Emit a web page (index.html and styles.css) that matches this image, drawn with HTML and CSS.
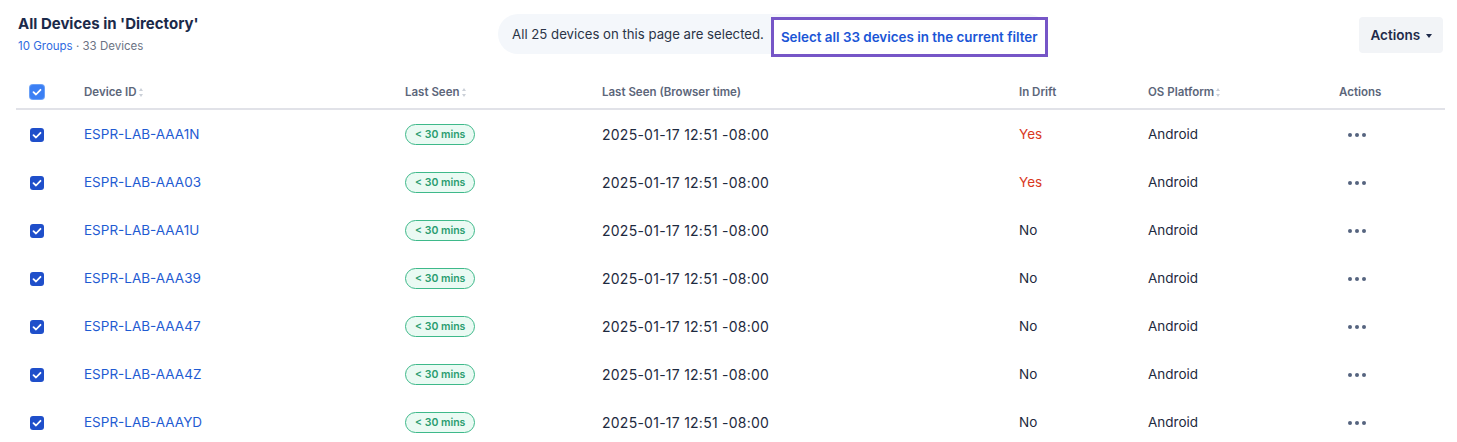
FILE: index.html
```html
<!DOCTYPE html>
<html lang="en">
<head>
    <meta charset="UTF-8">
    <meta name="viewport" content="width=device-width, initial-scale=1.0">
    <title>All Devices</title>
    <link rel="stylesheet" href="styles.css">
</head>
<body>
    <div id="page">
        <div class="topbar">
            <div class="title-block">
                <h1>All Devices in 'Directory'</h1>
                <div class="subtitle"><a href="#">10 Groups</a> · 33 Devices</div>
            </div>
            <div class="banner-wrap">
                <div class="banner">
                    <span>All 25 devices on this page are selected.</span>
                    <a href="#" class="select-all">Select all 33 devices in the current filter</a>
                </div>
            </div>
            <button class="actions-btn">Actions <span class="caret"></span></button>
        </div>

        <table class="devices">
            <colgroup>
                <col style="width: 54px">
                <col style="width: 321px">
                <col style="width: 197px">
                <col style="width: 417px">
                <col style="width: 129px">
                <col style="width: 191px">
                <col style="width: 120px">
            </colgroup>
            <thead>
                <tr>
                    <th><span class="check head-check"><svg viewBox="0 0 14 14"><path d="M3.5 7.2 L6 9.5 L10.5 4.8" /></svg></span></th>
                    <th>Device ID<span class="sort"></span></th>
                    <th>Last Seen<span class="sort"></span></th>
                    <th>Last Seen (Browser time)</th>
                    <th>In Drift</th>
                    <th>OS Platform<span class="sort"></span></th>
                    <th>Actions</th>
                </tr>
            </thead>
            <tbody id="rows"></tbody>
        </table>
    </div>

    <script>
        const rows = document.getElementById('rows');

        // id, in drift
        const devices = [
            ['ESPR-LAB-AAA1N', true],
            ['ESPR-LAB-AAA03', true],
            ['ESPR-LAB-AAA1U', false],
            ['ESPR-LAB-AAA39', false],
            ['ESPR-LAB-AAA47', false],
            ['ESPR-LAB-AAA4Z', false],
            ['ESPR-LAB-AAAYD', false]
        ];

        devices.forEach(([id, drift]) => {
            const tr = document.createElement('tr');
            tr.innerHTML = `
                <td><span class="check"><svg viewBox="0 0 14 14"><path d="M3.5 7.2 L6 9.5 L10.5 4.8" /></svg></span></td>
                <td><a href="#" class="device-link">${id}</a></td>
                <td><span class="badge">&lt; 30 mins</span></td>
                <td class="time">2025-01-17 12:51 -08:00</td>
                <td class="${drift ? 'drift-yes' : ''}">${drift ? 'Yes' : 'No'}</td>
                <td>Android</td>
                <td><span class="dots"><i></i><i></i><i></i></span></td>
            `;
            rows.appendChild(tr);
        });
    </script>
</body>
</html>
```

FILE: styles.css
```css
body {
    margin: 0;
    padding: 0;
    font-family: 'Inter', 'Liberation Sans', sans-serif;
    color: #1e2a40;
    background: #ffffff;
}
a {
    text-decoration: none;
}
#page {
    padding: 14px 14px 0 16px;
}
.topbar {
    display: flex;
    align-items: flex-start;
    height: 62px;
}
.title-block {
    padding-left: 2px;
}
.title-block h1 {
    margin: 0;
    font-size: 15px;
    font-weight: 700;
    color: #1b2a4a;
    line-height: 20px;
}
.subtitle {
    margin-top: 5px;
    font-size: 11.5px;
    color: #6b7384;
    line-height: 14px;
}
.subtitle a {
    color: #2f6ae0;
}
.banner-wrap {
    flex: 1;
    display: flex;
    justify-content: center;
    padding-right: 12px;
}
.banner {
    display: flex;
    align-items: center;
    height: 40px;
    padding-left: 14px;
    border-radius: 20px;
    background: #f4f7fb;
    font-size: 13.2px;
    color: #2a3447;
}
.select-all {
    display: flex;
    align-items: center;
    height: 34px;
    margin-left: 7px;
    margin-top: 6px;
    padding: 0 7px;
    border: 3px solid #7656c7;
    background: #ffffff;
    color: #1a55d6;
    font-size: 13.4px;
    font-weight: 600;
}
.actions-btn {
    margin-top: 3px;
    width: 84px;
    height: 36px;
    border: none;
    border-radius: 4px;
    background: #f2f4f7;
    color: #1e2a4a;
    font-family: inherit;
    font-size: 13.5px;
    font-weight: 600;
    cursor: pointer;
}
.caret {
    display: inline-block;
    width: 0;
    height: 0;
    margin-left: 2px;
    vertical-align: middle;
    border-left: 3.5px solid transparent;
    border-right: 3.5px solid transparent;
    border-top: 4px solid #1e2a4a;
}
.devices {
    width: 1429px;
    border-collapse: collapse;
    table-layout: fixed;
}
.devices th {
    height: 32px;
    padding: 0 14px;
    text-align: left;
    font-size: 11.5px;
    font-weight: 600;
    color: #5c667a;
    border-bottom: 2px solid #e1e2e8;
    white-space: nowrap;
}
.devices td {
    height: 48px;
    padding: 0 14px;
    font-size: 13.5px;
    color: #1e2a40;
    white-space: nowrap;
}
.devices td.time {
    font-size: 14px;
    letter-spacing: 0.25px;
}
.sort {
    display: inline-block;
    position: relative;
    width: 5px;
    height: 9px;
    margin-left: 2px;
    vertical-align: middle;
}
.sort:before, .sort:after {
    content: '';
    position: absolute;
    left: 0;
    border-left: 2.5px solid transparent;
    border-right: 2.5px solid transparent;
}
.sort:before {
    top: 0;
    border-bottom: 3px solid #cbd0d8;
}
.sort:after {
    bottom: 0;
    border-top: 3px solid #cbd0d8;
}
.check {
    display: inline-flex;
    width: 14px;
    height: 14px;
    border-radius: 3px;
    background: #1f4fca;
    vertical-align: middle;
}
.check svg {
    width: 14px;
    height: 14px;
}
.check path {
    fill: none;
    stroke: #ffffff;
    stroke-width: 1.8;
    stroke-linecap: round;
    stroke-linejoin: round;
}
.head-check {
    background: #3b7ff4;
    box-shadow: 0 0 0 1px #6aa0f7;
}
.device-link {
    color: #1f5bd2;
}
.badge {
    display: inline-block;
    height: 19px;
    line-height: 19px;
    padding: 0 9px;
    border: 1px solid #3eb98a;
    border-radius: 11px;
    background: #eafaf3;
    color: #2b9d70;
    font-size: 10.5px;
    font-weight: 600;
}
.drift-yes {
    color: #d9381e !important;
}
.dots {
    display: inline-flex;
    gap: 3px;
    margin-left: 9px;
    vertical-align: middle;
}
.dots i {
    width: 4px;
    height: 4px;
    border-radius: 50%;
    background: #55647f;
}
```
